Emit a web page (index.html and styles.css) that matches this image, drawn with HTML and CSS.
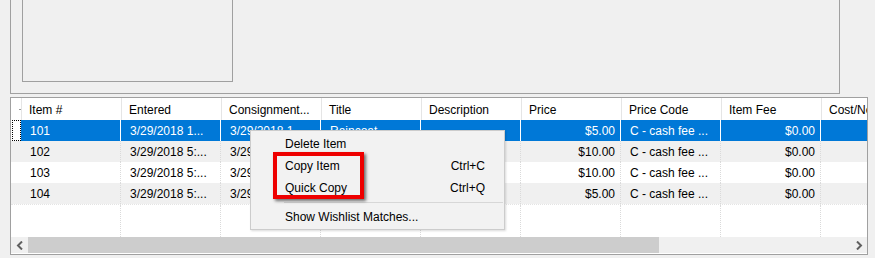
FILE: index.html
```html
<!DOCTYPE html>
<html lang="en">
<head>
  <meta charset="UTF-8">
  <title>Consignment Items</title>
  <link rel="stylesheet" href="styles.css">
</head>
<body>
  <div class="top-panel">
    <div class="preview"></div>
  </div>

  <div class="grid">
    <div class="row head">
      <div class="rh"><span class="mark"></span></div>
      <div class="c">Item #</div>
      <div class="c">Entered</div>
      <div class="c">Consignment...</div>
      <div class="c">Title</div>
      <div class="c">Description</div>
      <div class="c">Price</div>
      <div class="c">Price Code</div>
      <div class="c">Item Fee</div>
      <div class="c">Cost/Net</div>
    </div>
    <div class="row sel">
      <div class="rh"><span class="focus"></span></div>
      <div class="c">101</div>
      <div class="c">3/29/2018 1...</div>
      <div class="c">3/29/2018 1...</div>
      <div class="c">Raincoat</div>
      <div class="c"></div>
      <div class="c num">$5.00</div>
      <div class="c">C - cash fee ...</div>
      <div class="c num">$0.00</div>
      <div class="c"></div>
    </div>
    <div class="row alt">
      <div class="rh"></div>
      <div class="c">102</div>
      <div class="c">3/29/2018 5:...</div>
      <div class="c">3/29/2018 5:...</div>
      <div class="c">Umbrella</div>
      <div class="c"></div>
      <div class="c num">$10.00</div>
      <div class="c">C - cash fee ...</div>
      <div class="c num">$0.00</div>
      <div class="c"></div>
    </div>
    <div class="row">
      <div class="rh"></div>
      <div class="c">103</div>
      <div class="c">3/29/2018 5:...</div>
      <div class="c">3/29/2018 5:...</div>
      <div class="c">Boots</div>
      <div class="c"></div>
      <div class="c num">$10.00</div>
      <div class="c">C - cash fee ...</div>
      <div class="c num">$0.00</div>
      <div class="c"></div>
    </div>
    <div class="row alt">
      <div class="rh"></div>
      <div class="c">104</div>
      <div class="c">3/29/2018 5:...</div>
      <div class="c">3/29/2018 5:...</div>
      <div class="c">Hat</div>
      <div class="c"></div>
      <div class="c num">$5.00</div>
      <div class="c">C - cash fee ...</div>
      <div class="c num">$0.00</div>
      <div class="c"></div>
    </div>
    <div class="row filler">
      <div class="rh"></div>
      <div class="c"></div><div class="c"></div><div class="c"></div>
      <div class="c"></div><div class="c"></div><div class="c"></div>
      <div class="c"></div><div class="c"></div><div class="c"></div>
    </div>
    <div class="hscroll">
      <div class="arrow">
        <svg width="8" height="9" viewBox="0 0 8 9"><path d="M6 0.5 L2 4.5 L6 8.5" fill="none" stroke="#606060" stroke-width="2"/></svg>
      </div>
      <div class="track"><div class="thumb"></div></div>
      <div class="arrow">
        <svg width="8" height="9" viewBox="0 0 8 9"><path d="M2 0.5 L6 4.5 L2 8.5" fill="none" stroke="#606060" stroke-width="2"/></svg>
      </div>
    </div>
  </div>

  <div class="ctx-menu">
    <div class="item"><span class="label">Delete Item</span></div>
    <div class="item"><span class="label">Copy Item</span><span class="key">Ctrl+C</span></div>
    <div class="item"><span class="label">Quick Copy</span><span class="key">Ctrl+Q</span></div>
    <div class="sep"></div>
    <div class="item"><span class="label">Show Wishlist Matches...</span></div>
  </div>

  <div class="callout"></div>
</body>
</html>
```

FILE: styles.css
```css
body { margin: 0; background: #f0f0f0; font-family: "Liberation Sans", Arial, sans-serif; font-size: 12px; color: #000; position: relative; width: 875px; height: 258px; overflow: hidden; }

.top-panel { margin-left: 10px; width: 830px; height: 94px; border: 1px solid #a0a0a0; border-top: none; padding-left: 11px; box-sizing: border-box; }
.preview { width: 211px; height: 82px; border: 1px solid #a0a0a0; border-top: none; box-sizing: border-box; }

.grid { margin: 3px 0 0 10px; width: 858px; height: 158px; border: 1px solid #a0a0a0; box-sizing: border-box; background: #fff; overflow: hidden; }

.row { display: flex; height: 21px; white-space: nowrap; }
.row .rh { flex: 0 0 10px; position: relative; }
.row .c { flex: 0 0 100px; box-sizing: border-box; padding: 1px 5px 0 9px; line-height: 20px; overflow: hidden; border-right: 1px dotted #dadada; }
.row .num { text-align: right; }

.row.head { height: 22px; }
.row.head .c { line-height: 22px; padding: 1px 5px 0 7px; border-right: 1px solid #e5e5e5; }
.row.head .rh { border-right: 1px solid #e5e5e5; }
.mark { position: absolute; left: 8px; top: 11px; width: 2px; height: 1px; background: #9a9a9a; }

.row.alt { background: #f0f0f0; }
.row.sel .c { background: #0078d7; color: #fff; border-right: 1px solid #fff; }
.focus { position: absolute; left: 1px; top: 0; width: 9px; height: 21px; box-sizing: border-box; border: 1px dotted #000; }

.row.filler { height: 33px; border-top: 1px dotted #e4e4e4; box-sizing: border-box; }

.hscroll { display: flex; height: 16px; background: #f0f0f0; }
.hscroll .arrow { flex: 0 0 17px; display: flex; align-items: center; justify-content: center; }
.hscroll .track { flex: 1; }
.thumb { width: 631px; height: 16px; background: #cdcdcd; }

.ctx-menu { position: absolute; left: 250px; top: 130px; width: 255px; height: 100px; box-sizing: border-box; background: #f2f2f2; border: 1px solid #cccccc; padding: 2px 0; box-shadow: 1px 1px 2px rgba(0,0,0,0.15); }
.ctx-menu .item { display: flex; height: 22px; line-height: 23px; padding: 0 19px 0 34px; }
.ctx-menu .label { flex: 1; }
.ctx-menu .sep { height: 1px; background: #d7d7d7; margin: 3px 1px 3px 33px; }

.callout { position: absolute; left: 273px; top: 152px; width: 91px; height: 47px; box-sizing: border-box; border: 4px solid #ee0000; box-shadow: 2px 2px 3px rgba(0,0,0,0.55); }
```
